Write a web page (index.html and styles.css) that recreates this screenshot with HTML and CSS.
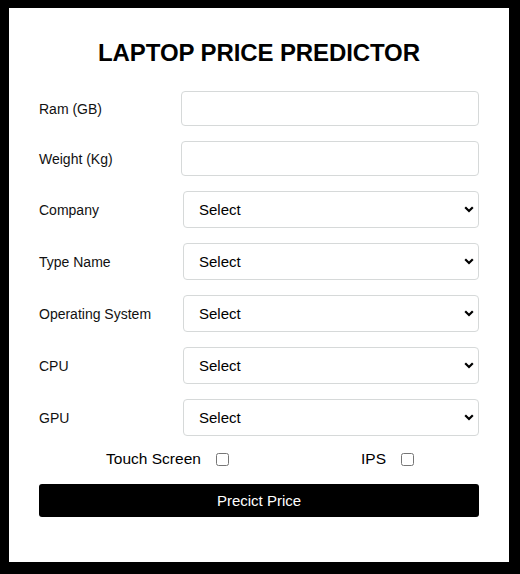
FILE: index.html
```html
<!DOCTYPE html>
<html lang="en">
<head>
<meta charset="utf-8">
<title>Laptop Price Predictor</title>
<link rel="stylesheet" href="styles.css">
</head>
<body>
<div class="card">
  <h1 class="title">LAPTOP PRICE PREDICTOR</h1>
  <form class="form">
    <div class="row row-input">
      <label class="label">Ram (GB)</label>
      <input class="field" type="text">
    </div>
    <div class="row row-input">
      <label class="label">Weight (Kg)</label>
      <input class="field" type="text">
    </div>
    <div class="row row-select">
      <label class="label">Company</label>
      <div class="select-wrap">
        <select class="select"><option>Select</option></select>
        <svg class="chev" width="10" height="7" viewBox="0 0 10 7"><path d="M1.2 1.2 L5 5 L8.8 1.2" fill="none" stroke="#000" stroke-width="2.2"/></svg>
      </div>
    </div>
    <div class="row row-select">
      <label class="label">Type Name</label>
      <div class="select-wrap">
        <select class="select"><option>Select</option></select>
        <svg class="chev" width="10" height="7" viewBox="0 0 10 7"><path d="M1.2 1.2 L5 5 L8.8 1.2" fill="none" stroke="#000" stroke-width="2.2"/></svg>
      </div>
    </div>
    <div class="row row-select">
      <label class="label">Operating System</label>
      <div class="select-wrap">
        <select class="select"><option>Select</option></select>
        <svg class="chev" width="10" height="7" viewBox="0 0 10 7"><path d="M1.2 1.2 L5 5 L8.8 1.2" fill="none" stroke="#000" stroke-width="2.2"/></svg>
      </div>
    </div>
    <div class="row row-select">
      <label class="label">CPU</label>
      <div class="select-wrap">
        <select class="select"><option>Select</option></select>
        <svg class="chev" width="10" height="7" viewBox="0 0 10 7"><path d="M1.2 1.2 L5 5 L8.8 1.2" fill="none" stroke="#000" stroke-width="2.2"/></svg>
      </div>
    </div>
    <div class="row row-select">
      <label class="label">GPU</label>
      <div class="select-wrap">
        <select class="select"><option>Select</option></select>
        <svg class="chev" width="10" height="7" viewBox="0 0 10 7"><path d="M1.2 1.2 L5 5 L8.8 1.2" fill="none" stroke="#000" stroke-width="2.2"/></svg>
      </div>
    </div>
    <div class="checks">
      <div class="check-cell">
        <label class="check-label">Touch Screen</label>
        <input class="check" type="checkbox">
      </div>
      <div class="check-cell">
        <label class="check-label">IPS</label>
        <input class="check" type="checkbox">
      </div>
    </div>
    <button class="btn" type="button">Precict Price</button>
  </form>
</div>
</body>
</html>
```

FILE: styles.css
```css
* { box-sizing: border-box; }
html, body {
  margin: 0;
  padding: 0;
  background: #000;
}
body {
  padding: 8px 11px 12px 9px;
  font-family: "Liberation Sans", Arial, sans-serif;
  color: #111;
}
.card {
  background: #fff;
  width: 500px;
  height: 554px;
  padding: 31px 30px 0 30px;
}
.title {
  margin: 0 0 24px 0;
  font-size: 24px;
  font-weight: bold;
  text-align: center;
  color: #000;
  line-height: 28px;
  letter-spacing: -0.1px;
}
.form {
  display: flex;
  flex-direction: column;
}
.row {
  display: flex;
  align-items: center;
  margin-bottom: 15px;
}
.row-input { height: 35px; }
.row-select { height: 37px; }
.label {
  font-size: 14px;
  color: #111;
}
.row-input .label { width: 142px; flex: none; }
.row-select .label { width: 144px; flex: none; }
.field {
  flex: 1;
  height: 35px;
  border: 1px solid #d6d9d9;
  border-radius: 4px;
  background: #fff;
  outline: none;
  font-family: inherit;
  font-size: 15px;
}
.select-wrap {
  position: relative;
  flex: 1;
  height: 37px;
}
.select {
  appearance: none;
  -webkit-appearance: none;
  width: 100%;
  height: 37px;
  border: 1px solid #d6d9d9;
  border-radius: 4px;
  background: #fff;
  padding: 0 30px 0 15px;
  font-family: inherit;
  font-size: 15px;
  color: #000;
  outline: none;
}
.chev {
  position: absolute;
  right: 5px;
  top: 15px;
  pointer-events: none;
}
.checks {
  display: grid;
  grid-template-columns: 1fr 1fr;
  margin-top: -1px;
  height: 18px;
}
.check-cell {
  display: flex;
  align-items: center;
  justify-content: center;
  padding-left: 37px;
}
.check-label {
  font-size: 15.5px;
  color: #000;
}
.check {
  margin: 0 0 0 15px;
  width: 13px;
  height: 13px;
}
.btn {
  margin-top: 16px;
  height: 33px;
  background: #000;
  color: #fff;
  border: none;
  border-radius: 3px;
  font-family: inherit;
  font-size: 15px;
  padding: 0;
}
```
